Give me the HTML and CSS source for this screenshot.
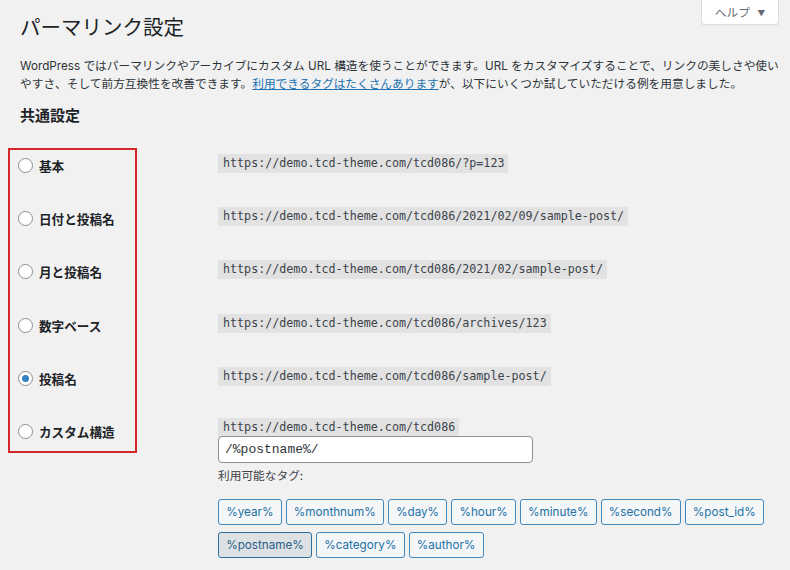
FILE: index.html
```html
<!DOCTYPE html>
<html lang="ja">
<head>
<meta charset="utf-8">
<title>パーマリンク設定</title>
<link rel="stylesheet" href="styles.css">
</head>
<body>
<div class="wrap">
  <header class="head">
    <h1 class="title">パーマリンク設定</h1>
    <button class="help-tab" type="button">ヘルプ <span class="caret">▼</span></button>
  </header>
  <p class="desc">WordPress ではパーマリンクやアーカイブにカスタム URL 構造を使うことができます。URL をカスタマイズすることで、リンクの美しさや使いやすさ、そして前方互換性を改善できます。<a href="#" class="link">利用できるタグはたくさんあります</a>が、以下にいくつか試していただける例を用意しました。</p>
  <h2 class="section">共通設定</h2>

  <div class="settings">
    <div class="options">
      <label class="opt"><span class="radio"></span><span class="opt-label">基本</span></label>
      <label class="opt"><span class="radio"></span><span class="opt-label">日付と投稿名</span></label>
      <label class="opt"><span class="radio"></span><span class="opt-label">月と投稿名</span></label>
      <label class="opt"><span class="radio"></span><span class="opt-label">数字ベース</span></label>
      <label class="opt"><span class="radio checked"></span><span class="opt-label">投稿名</span></label>
      <label class="opt"><span class="radio"></span><span class="opt-label">カスタム構造</span></label>
    </div>
    <div class="values">
      <div class="val"><code class="url">https://demo.tcd-theme.com/tcd086/?p=123</code></div>
      <div class="val"><code class="url">https://demo.tcd-theme.com/tcd086/2021/02/09/sample-post/</code></div>
      <div class="val"><code class="url">https://demo.tcd-theme.com/tcd086/2021/02/sample-post/</code></div>
      <div class="val"><code class="url">https://demo.tcd-theme.com/tcd086/archives/123</code></div>
      <div class="val"><code class="url">https://demo.tcd-theme.com/tcd086/sample-post/</code></div>
      <div class="custom">
        <code class="url">https://demo.tcd-theme.com/tcd086</code>
        <input class="struct" type="text" value="/%postname%/">
        <div class="avail">利用可能なタグ:</div>
        <div class="tags">
          <button class="tag" type="button">%year%</button>
          <button class="tag" type="button">%monthnum%</button>
          <button class="tag" type="button">%day%</button>
          <button class="tag" type="button">%hour%</button>
          <button class="tag" type="button">%minute%</button>
          <button class="tag" type="button">%second%</button>
          <button class="tag" type="button">%post_id%</button>
          <button class="tag active" type="button">%postname%</button>
          <button class="tag" type="button">%category%</button>
          <button class="tag" type="button">%author%</button>
        </div>
      </div>
    </div>
  </div>
</div>
</body>
</html>
```
FILE: styles.css
```css
html, body {
  margin: 0;
  padding: 0;
  background: #f1f1f1;
}
body {
  font-family: Inter, "Noto Sans CJK JP", sans-serif;
  font-size: 11.7px;
  color: #1d2327;
  overflow: hidden;
}
.wrap {
  padding: 0 10px 0 20px;
}
.head {
  display: flex;
  justify-content: space-between;
  align-items: flex-start;
}
.title {
  margin: 14px 0 0;
  font-size: 20.5px;
  line-height: 28px;
  font-weight: 400;
  color: #1d2327;
}
.help-tab {
  width: 78px;
  height: 25px;
  margin: 0 1px 0 0;
  padding: 0 0 1px;
  background: #fff;
  border: 1px solid #dcdcde;
  border-top: none;
  border-radius: 0 0 4px 4px;
  box-shadow: 0 1px 1px rgba(0,0,0,0.04);
  font-family: inherit;
  font-size: 11.7px;
  color: #646970;
}
.caret {
  font-size: 8px;
  margin-left: 4px;
  vertical-align: 1px;
}
.desc {
  margin: 15px 0 0;
  line-height: 18px;
  max-width: 760px;
  color: #2c3338;
}
.link {
  color: #2271b1;
  text-decoration: underline;
}
.section {
  margin: 13px 0 0;
  font-size: 15px;
  line-height: 20px;
  font-weight: 700;
}
.settings {
  display: flex;
  align-items: flex-start;
  gap: 81px;
  margin: 22px 0 0 -12px;
}
.options {
  border: 2px solid #d3262a;
  padding: 0 0 4px 8px;
  box-sizing: border-box;
  width: 129px;
  display: flex;
  flex-direction: column;
  gap: 23.4px;
}
.opt {
  height: 30px;
  display: flex;
  align-items: center;
  gap: 6px;
  font-size: 12.6px;
  font-weight: 700;
}
.radio {
  width: 15px;
  height: 15px;
  box-sizing: border-box;
  border: 1px solid #8c8f94;
  border-radius: 50%;
  background: #fff;
  display: flex;
  align-items: center;
  justify-content: center;
  flex: none;
}
.radio.checked::before {
  content: "";
  width: 7px;
  height: 7px;
  border-radius: 50%;
  background: #3582c4;
}
.values {
  flex: 1;
  display: flex;
  flex-direction: column;
  gap: 23.4px;
}
.val {
  height: 30px;
  display: flex;
  align-items: center;
}
.url {
  display: inline-block;
  font-family: "DejaVu Sans Mono", monospace;
  font-size: 11.7px;
  line-height: 13px;
  padding: 3px 4px 3px 5px;
  background: #e2e2e2;
  color: #3c434a;
}
.custom {
  margin-top: 3px;
  display: flex;
  flex-direction: column;
  align-items: flex-start;
}
.struct {
  margin: -1px 0 0;
  width: 315px;
  height: 27px;
  box-sizing: border-box;
  border: 1px solid #8c8f94;
  border-radius: 4px;
  background: #fff;
  padding: 0 6px;
  font-family: "Liberation Mono", monospace;
  font-size: 13px;
  color: #2c3338;
}
.avail {
  margin-top: 4px;
  line-height: 18px;
  color: #3c434a;
}
.tags {
  margin-top: 14px;
  display: flex;
  flex-wrap: wrap;
  gap: 7px 4px;
  width: 560px;
}
.tag {
  height: 26px;
  padding: 0 7.2px;
  border: 1px solid #3f89bd;
  border-radius: 3px;
  background: #f4f6f7;
  color: #2271a8;
  font-family: inherit;
  font-size: 11.7px;
  line-height: 24px;
}
.tag.active {
  background: #dde1e4;
  border-color: #2f6f9c;
  color: #2a5f88;
}
```
